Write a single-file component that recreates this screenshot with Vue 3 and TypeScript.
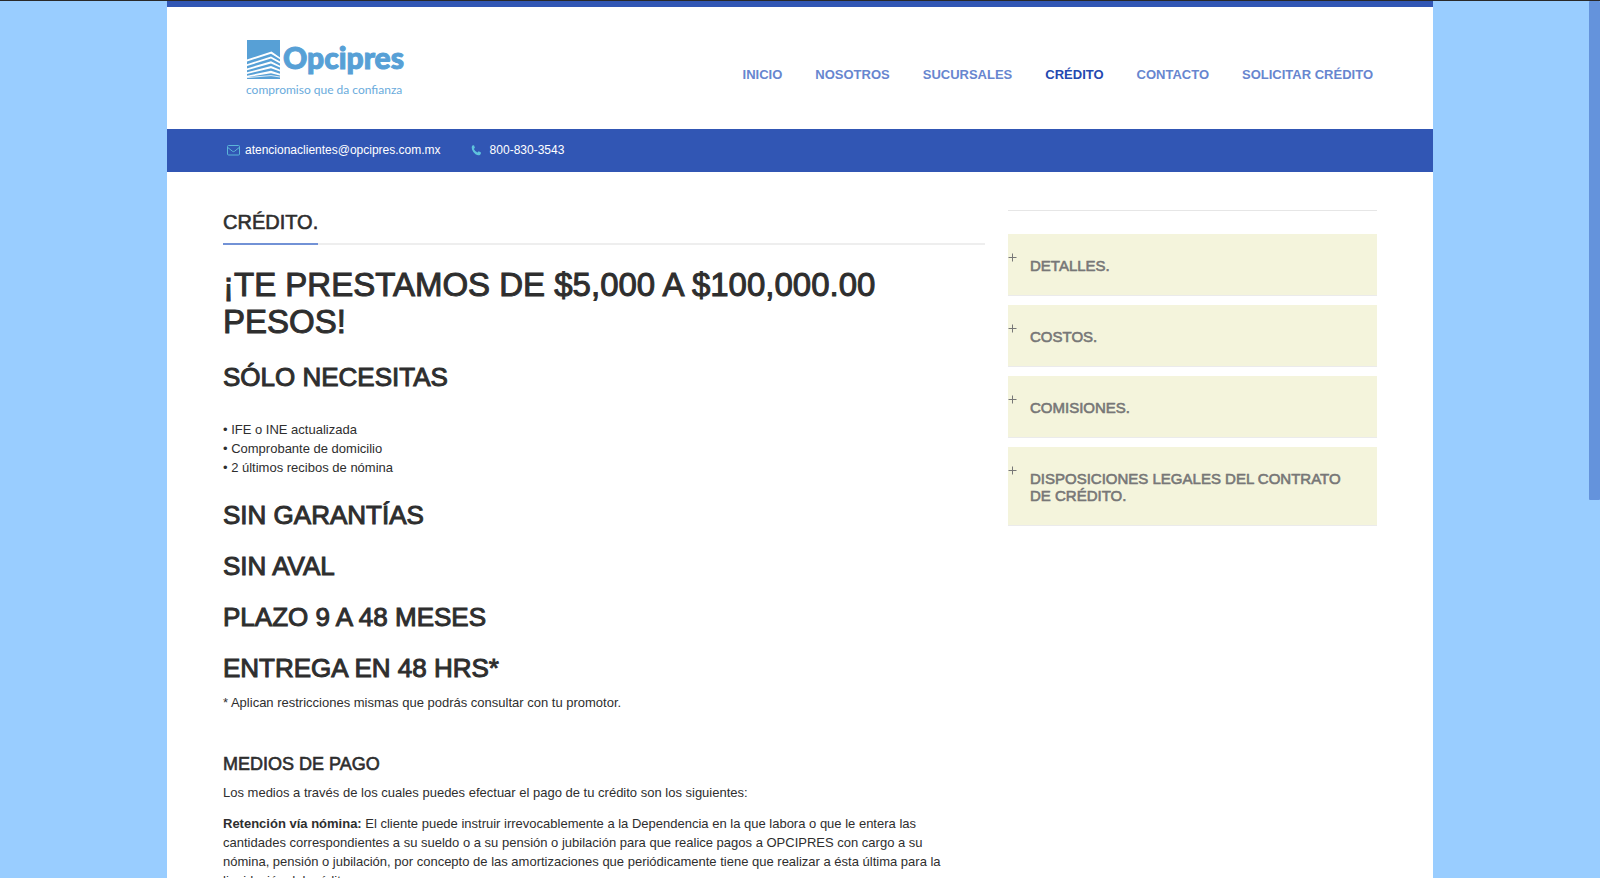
<script setup lang="ts">
import { ref } from 'vue'

interface NavItem {
  label: string
  href: string
  active?: boolean
}

const navItems: NavItem[] = [
  { label: 'INICIO', href: '#inicio' },
  { label: 'NOSOTROS', href: '#nosotros' },
  { label: 'SUCURSALES', href: '#sucursales' },
  { label: 'CRÉDITO', href: '#credito', active: true },
  { label: 'CONTACTO', href: '#contacto' },
  { label: 'SOLICITAR CRÉDITO', href: '#solicitar' },
]

const requirements: string[] = [
  'IFE o INE actualizada',
  'Comprobante de domicilio',
  '2 últimos recibos de nómina',
]

const benefits: string[] = ['SIN GARANTÍAS', 'SIN AVAL', 'PLAZO 9 A 48 MESES', 'ENTREGA EN 48 HRS*']

const panels: string[] = [
  'DETALLES.',
  'COSTOS.',
  'COMISIONES.',
  'DISPOSICIONES LEGALES DEL CONTRATO DE CRÉDITO.',
]

const selected = ref<number | null>(null)

function toggle(index: number): void {
  selected.value = selected.value === index ? null : index
}
</script>

<template>
  <div class="page">
    <div class="sheet">
      <header class="header">
        <a class="logo" href="#inicio" aria-label="Opcipres">
          <svg width="162" height="62" viewBox="0 0 162 62">
            <path d="M1 1H34V18.500L25.500 12.500 1 20.500Z" fill="#57a0d6" />
            <g fill="#57a0d6">
              <path d="M1 22.500 25 14.700 34 20.300V22.600L25 17.400 1 25.300Z" />
              <path d="M1 27 25 19.600 34 24.500V26.800L25 22.200 1 29.500Z" />
              <path d="M1 31.200 25 24.400 34 28.600V30.800L25 27 1 33.300Z" />
              <path d="M1 35 25 29.200 34 32.600V34.800L25 31.700 1 36.800Z" />
              <path d="M1 38.300 25 34.200 34 36.600V40H1Z" />
            </g>
            <path d="M1 38.600 25 36.600 34 38" fill="none" stroke="#fff" stroke-width="0.800" />
            <text class="logo-name" x="37" y="30">Opcipres</text>
            <text class="logo-tag" x="0" y="55">compromiso que da confianza</text>
          </svg>
        </a>
        <nav class="nav" aria-label="Principal">
          <a
            v-for="item in navItems"
            :key="item.label"
            :href="item.href"
            :class="{ active: item.active }"
            >{{ item.label }}</a
          >
        </nav>
      </header>

      <div class="contact">
        <a href="mailto:atencionaclientes@opcipres.com.mx">
          <svg width="13" height="11" viewBox="0 0 13 11" fill="none" stroke="#5bb5d9">
            <rect x="0.500" y="0.500" width="12" height="9.500" rx="1" />
            <path d="M0.800 2.500 5.500 6.300Q6.500 7 7.500 6.300L12.200 2.500" />
          </svg>
          atencionaclientes@opcipres.com.mx
        </a>
        <a class="phone" href="tel:8008303543">
          <svg width="13" height="11" viewBox="0 0 13 11">
            <path
              d="M2.300.6 4 .3Q4.500 1.300 4.900 2.800L3.800 4Q5 6.500 7.500 7.500L8.700 6.300Q10.200 7 11 7.400 11 9.200 9.900 9.900 8 10.800 5.500 9.200 3 7.300 2 4.500 1.200 1.700 2.300.6Z"
              fill="#5fc3dc"
            />
          </svg>
          800-830-3543
        </a>
      </div>

      <div class="content">
        <main>
          <div class="title"><h2>CRÉDITO.</h2></div>
          <h1>¡TE PRESTAMOS DE $5,000 A $100,000.00 PESOS!</h1>
          <h3 class="needs">SÓLO NECESITAS</h3>
          <ul>
            <li v-for="item in requirements" :key="item">• {{ item }}</li>
          </ul>
          <h3 v-for="item in benefits" :key="item">{{ item }}</h3>
          <p class="note">* Aplican restricciones mismas que podrás consultar con tu promotor.</p>
          <h4>MEDIOS DE PAGO</h4>
          <p>Los medios a través de los cuales puedes efectuar el pago de tu crédito son los siguientes:</p>
          <p>
            <strong>Retención vía nómina:</strong> El cliente puede instruir irrevocablemente a la
            Dependencia en la que labora o que le entera las cantidades correspondientes a su sueldo
            o a su pensión o jubilación para que realice pagos a OPCIPRES con cargo a su nómina,
            pensión o jubilación, por concepto de las amortizaciones que periódicamente tiene que
            realizar a ésta última para la liquidación del crédito.
          </p>
        </main>

        <aside>
          <button
            v-for="(panel, index) in panels"
            :key="panel"
            type="button"
            :aria-expanded="selected === index"
            @click="toggle(index)"
          >
            <svg class="plus" width="9" height="9" viewBox="0 0 9 9" stroke="#777">
              <path d="M4.500 0.500v8M0.500 4.500h8" />
            </svg>
            <span>{{ panel }}</span>
          </button>
        </aside>
      </div>
    </div>
    <div class="scroll-thumb" aria-hidden="true"></div>
  </div>
</template>

<style>
html {
  background: #99cdff;
  scrollbar-width: none;
}
body {
  margin: 0;
}
</style>

<style scoped>
.page {
  border-top: 1px solid #292929;
  font-family: 'Liberation Sans', Arial, sans-serif;
  font-size: 13px;
  line-height: 19px;
  color: #2e2e2e;
}
.sheet {
  width: 79.125%;
  min-height: calc(100vh - 7px);
  margin: 0 auto;
  border-top: 6px solid #3156b4;
  background: #fff;
}
a {
  text-decoration: none;
}
.header {
  display: flex;
  align-items: center;
  justify-content: space-between;
  height: 122px;
  padding: 0 60px 0 79px;
}
.logo {
  padding-top: 4px;
}
.logo,
.logo svg {
  display: block;
}
.logo-name {
  font: 900 30px Lato, sans-serif;
  fill: #57a0d6;
  stroke: #57a0d6;
  stroke-width: 1px;
}
.logo-tag {
  font: 400 12px Lato, sans-serif;
  fill: #6aabdc;
}
.nav {
  display: flex;
  gap: 33px;
  padding-top: 12px;
}
.nav a {
  font-weight: 700;
  color: #6786cf;
}
.nav .active {
  color: #2449b0;
}
.contact {
  display: flex;
  align-items: center;
  gap: 29px;
  height: 43px;
  padding: 0 60px;
  background: #3156b4;
}
.contact a {
  display: flex;
  align-items: center;
  gap: 5px;
  font-size: 12px;
  color: #fff;
}
.contact .phone {
  gap: 7px;
}
.content {
  display: grid;
  grid-template-columns: 762fr 369fr;
  gap: 23px;
  align-items: start;
  padding: 38px 56px 20px;
}
h1,
h2,
h3,
h4,
p,
ul {
  margin: 0;
}
h1,
h2,
h3,
h4,
button {
  font-weight: 400;
  -webkit-text-stroke: 1px currentColor;
}
h2,
h4,
button {
  -webkit-text-stroke-width: 0.6px;
}
.title {
  display: flex;
  border-bottom: 2px solid #eee;
}
h2 {
  margin-bottom: -2px;
  padding-top: 1px;
  padding-bottom: 9px;
  border-bottom: 2px solid #7292d6;
  font-size: 20px;
  line-height: 23px;
}
h1 {
  margin: 21px 0 22px;
  font-size: 33px;
  line-height: 37px;
}
h3 {
  margin-bottom: 21px;
  font-size: 26px;
  line-height: 30px;
}
ul {
  margin: 28px 0 23px;
  padding: 0;
  list-style: none;
}
p {
  margin-bottom: 12px;
  padding-right: 24px;
}
.note {
  margin: -11px 0 42px;
}
h4 {
  margin-bottom: 9px;
  font-size: 18px;
  line-height: 20px;
}
aside {
  display: flex;
  flex-direction: column;
  gap: 9px;
  padding-top: 23px;
  border-top: 1px solid #e6e6e6;
}
button {
  display: flex;
  align-items: flex-start;
  gap: 13px;
  padding: 23px 16px 21px 0;
  border: 0;
  border-bottom: 1px solid #ebebeb;
  background: #f4f4dc;
  font-family: inherit;
  font-size: 15px;
  line-height: 17px;
  text-align: left;
  color: #777;
  cursor: pointer;
}
.plus {
  flex: none;
  margin-top: -4px;
}
.scroll-thumb {
  position: fixed;
  top: 1px;
  right: 0;
  width: 11px;
  height: 499px;
  border-radius: 1px;
  background: #6493dc;
}
</style>
